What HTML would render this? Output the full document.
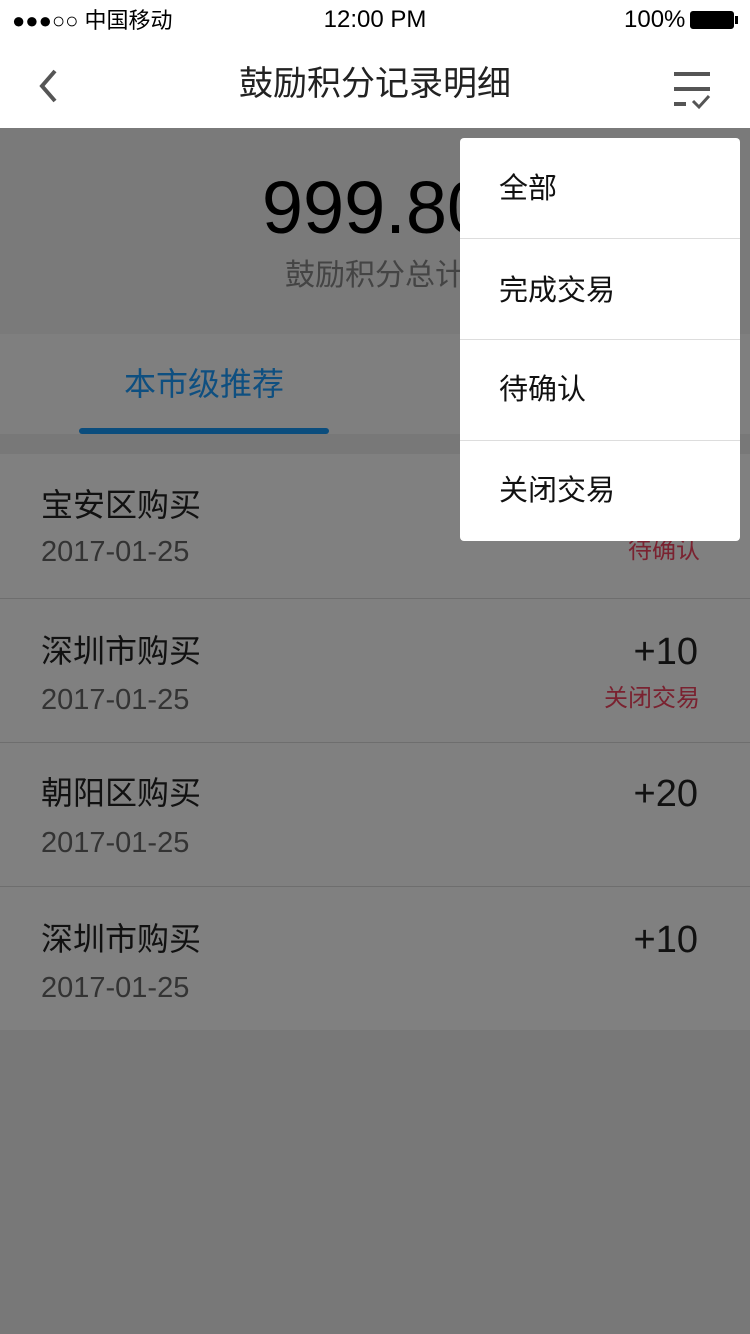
<!DOCTYPE html>
<html><head><meta charset="utf-8"><style>
*{margin:0;padding:0;box-sizing:border-box}
body{width:750px;height:1334px;position:relative;overflow:hidden;font-family:"Liberation Sans","Noto Sans CJK SC",sans-serif;background:#787878}
.a{position:absolute}
</style></head><body>
<div class="a" style="left:0;top:0;width:750px;height:128px;background:#fff"></div>
<div class="a" style="left:12px;top:6px;font-size:22px;color:#000;line-height:30px">●●●○○ 中国移动</div>
<div class="a" style="left:0;width:750px;top:4px;text-align:center;font-size:24px;line-height:32px">12:00 PM</div>
<div class="a" style="left:624px;top:4px;font-size:24px;line-height:32px">100%</div>
<div class="a" style="left:690px;top:11px;width:44px;height:18px;border:2px solid #000;background:#000;border-radius:3px"></div>
<div class="a" style="left:735px;top:16px;width:3px;height:8px;background:#000"></div>
<svg class="a" style="left:36px;top:68px" width="24" height="36"><path d="M19 3 L6 18 L19 33" fill="none" stroke="#555" stroke-width="4"/></svg>
<div class="a" style="left:0;width:750px;top:61px;text-align:center;font-size:34px;line-height:46px;color:#222">鼓励积分记录明细</div>
<svg class="a" style="left:670px;top:70px" width="44" height="40"><g stroke="#555" stroke-width="4"><line x1="4" y1="4" x2="40" y2="4"/><line x1="4" y1="19" x2="40" y2="19"/><line x1="4" y1="34" x2="16" y2="34"/></g><path d="M23 31 L29 37 L39 26" fill="none" stroke="#555" stroke-width="3"/></svg>
<div class="a" style="left:0;top:128px;width:750px;height:206px;background:#7a7a7a"></div>
<div class="a" style="left:0;width:750px;top:166px;text-align:center;font-size:74px;line-height:84px;color:#000">999.80</div>
<div class="a" style="left:0;width:750px;top:256px;text-align:center;font-size:30px;line-height:40px;color:#444">鼓励积分总计</div>
<div class="a" style="left:0;top:334px;width:750px;height:100px;background:#7f7f7f"></div>
<div class="a" style="left:79px;width:250px;top:364px;text-align:center;font-size:32px;line-height:40px;color:#0e4f80">本市级推荐</div>
<div class="a" style="left:79px;top:428px;width:250px;height:6px;border-radius:3px;background:#0b4d7d"></div>
<div class="a" style="left:0;top:454px;width:750px;height:576px;background:#808080"></div>
<div class="a" style="left:0;top:598px;width:750px;height:1px;background:#6e6e6e"></div>
<div class="a" style="left:0;top:742px;width:750px;height:1px;background:#6e6e6e"></div>
<div class="a" style="left:0;top:886px;width:750px;height:1px;background:#6e6e6e"></div>
<div class="a" style="left:41px;top:485px;font-size:32px;line-height:40px;color:#111">宝安区购买</div>
<div class="a" style="left:41px;top:535px;font-size:29px;line-height:34px;color:#333">2017-01-25</div>
<div class="a" style="right:50px;top:534px;font-size:24px;line-height:34px;color:#7a2230">待确认</div>
<div class="a" style="left:41px;top:631px;font-size:32px;line-height:40px;color:#111">深圳市购买</div>
<div class="a" style="left:41px;top:683px;font-size:29px;line-height:34px;color:#333">2017-01-25</div>
<div class="a" style="right:52px;top:628px;font-size:38px;line-height:48px;color:#111">+10</div>
<div class="a" style="right:50px;top:682px;font-size:24px;line-height:34px;color:#7a2230">关闭交易</div>
<div class="a" style="left:41px;top:773px;font-size:32px;line-height:40px;color:#111">朝阳区购买</div>
<div class="a" style="left:41px;top:826px;font-size:29px;line-height:34px;color:#333">2017-01-25</div>
<div class="a" style="right:52px;top:770px;font-size:38px;line-height:48px;color:#111">+20</div>
<div class="a" style="left:41px;top:919px;font-size:32px;line-height:40px;color:#111">深圳市购买</div>
<div class="a" style="left:41px;top:971px;font-size:29px;line-height:34px;color:#333">2017-01-25</div>
<div class="a" style="right:52px;top:916px;font-size:38px;line-height:48px;color:#111">+10</div>
<div class="a" style="left:460px;top:138px;width:280px;height:403px;background:#fff;border-radius:4px"></div>
<div class="a" style="left:460px;top:238px;width:280px;height:1px;background:#ddd"></div>
<div class="a" style="left:460px;top:339px;width:280px;height:1px;background:#ddd"></div>
<div class="a" style="left:460px;top:440px;width:280px;height:1px;background:#ddd"></div>
<div class="a" style="left:499px;top:169px;font-size:29px;line-height:40px;color:#111">全部</div>
<div class="a" style="left:499px;top:271px;font-size:29px;line-height:40px;color:#111">完成交易</div>
<div class="a" style="left:499px;top:370px;font-size:29px;line-height:40px;color:#111">待确认</div>
<div class="a" style="left:499px;top:471px;font-size:29px;line-height:40px;color:#111">关闭交易</div>
</body></html>
